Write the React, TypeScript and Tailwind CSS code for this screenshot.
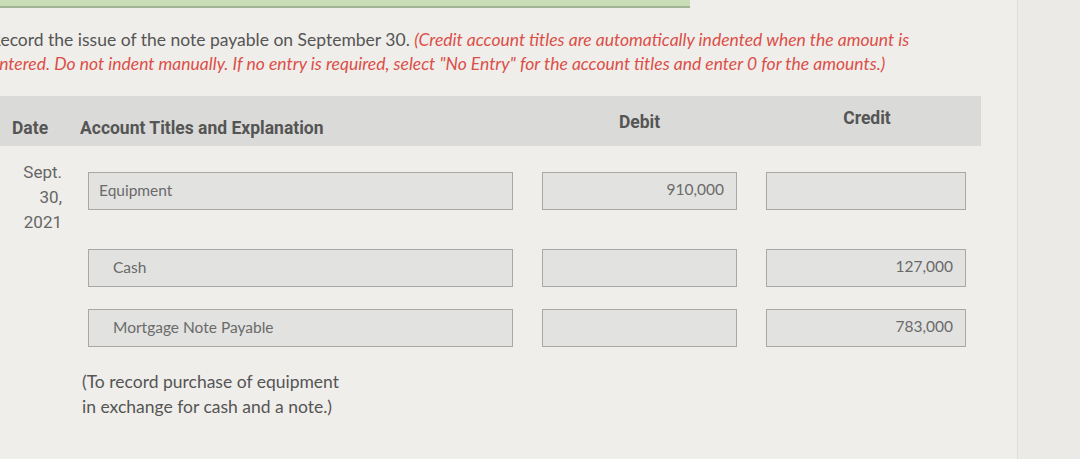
import React from "react";

const lato = { fontFamily: "Lato, 'Open Sans', sans-serif" } as React.CSSProperties;

function Box({ w, text, indent, align }: { w: string; text?: string; indent?: boolean; align?: "right" }) {
  return (
    <div
      className={`${w} h-[38px] bg-[#e2e2e0] border border-[#a8a8a6] flex items-center text-[15.5px] text-[#6a6a6a] ${
        align === "right" ? "justify-end pr-[12px] pb-[3px]" : indent ? "pl-[24px]" : "pl-[10px]"
      } font-['Lato',sans-serif]`}
    >
      {text}
    </div>
  );
}

export default function App() {
  return (
    <div className="w-[1080px] h-[459px] bg-[#efeeea] relative overflow-hidden flex">
      <div className="w-[1017px] h-full flex flex-col">
        <div className="w-[690px] h-[8px] bg-[#c9ddb6] border-b-2 border-[#a3b396] shrink-0" />
        <div
          className="mt-[20px] ml-[-10px] text-[17.5px] leading-[24px] text-[#555] whitespace-nowrap"
          style={lato}
        >
          <div>
            Record the issue of the note payable on September 30.{" "}
            <span className="italic text-[#dc4f49]">
              (Credit account titles are automatically indented when the amount is
            </span>
          </div>
          <div className="italic text-[#dc4f49]">
            Entered. Do not indent manually. If no entry is required, select "No Entry" for the account titles and enter 0 for the amounts.)
          </div>
        </div>

        <div className="mt-[20px] w-[981px] h-[50px] bg-[#dadad8] flex items-center font-['Roboto',sans-serif] font-bold text-[17.5px] text-[#555]">
          <div className="w-[80px] pl-[12px] pt-[14px]">Date</div>
          <div className="w-[462px] pt-[14px]">Account Titles and Explanation</div>
          <div className="w-[225px] text-center pr-[30px] pt-[2px]">Debit</div>
          <div className="w-[200px] text-center pb-[6px]">Credit</div>
        </div>

        <div className="flex items-start pt-[14px]">
          <div className="w-[62px] text-right font-['Roboto',sans-serif] text-[17px] leading-[25px] text-[#666]">
            Sept.
            <br />
            30,
            <br />
            2021
          </div>
          <div className="flex items-center gap-[29px] ml-[26px] mt-[12px]">
            <Box w="w-[425px]" text="Equipment" />
            <Box w="w-[195px]" text="910,000" align="right" />
            <Box w="w-[200px]" />
          </div>
        </div>

        <div className="flex items-center gap-[29px] ml-[88px] mt-[14px]">
          <Box w="w-[425px]" text="Cash" indent />
          <Box w="w-[195px]" />
          <Box w="w-[200px]" text="127,000" align="right" />
        </div>

        <div className="flex items-center gap-[29px] ml-[88px] mt-[22px]">
          <Box w="w-[425px]" text="Mortgage Note Payable" indent />
          <Box w="w-[195px]" />
          <Box w="w-[200px]" text="783,000" align="right" />
        </div>

        <div className="ml-[82px] mt-[22px] text-[17.5px] leading-[25px] text-[#555]" style={lato}>
          (To record purchase of equipment
          <br />
          in exchange for cash and a note.)
        </div>
      </div>
      <div className="flex-1 h-full bg-[#ebeae6] border-l border-[#dedcd8]" />
    </div>
  );
}
